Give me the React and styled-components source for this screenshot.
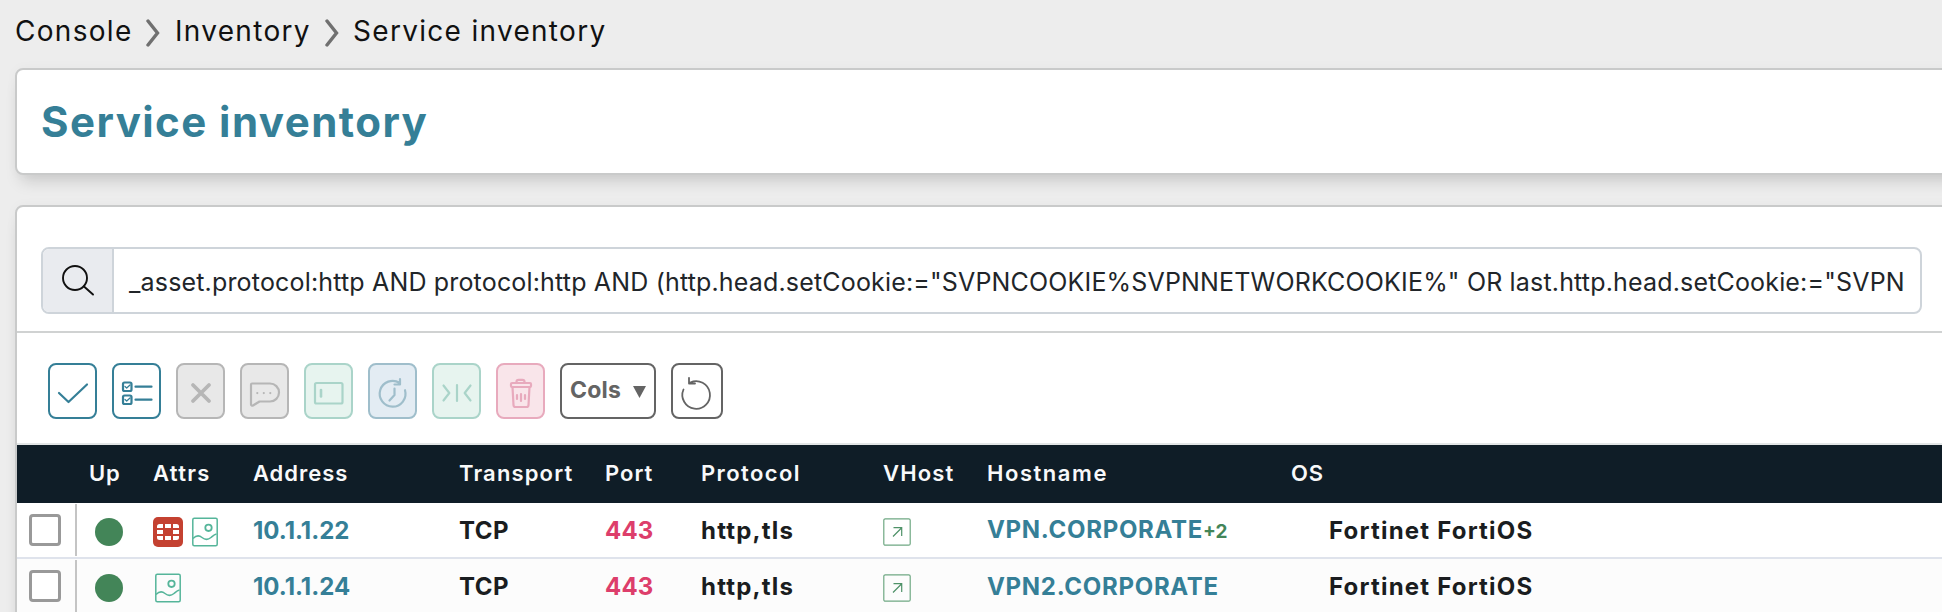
import styled, { createGlobalStyle } from "styled-components";

const GlobalStyle = createGlobalStyle`
  * {
    box-sizing: border-box;
  }
  body {
    margin: 0;
    height: 612px;
    overflow: hidden;
    background: #ededed;
    font-family: Inter, "Liberation Sans", sans-serif;
  }
`;

const buttons = [
  { tone: "active", icon: "check" },
  { tone: "active", icon: "list" },
  { tone: "gray", icon: "close" },
  { tone: "gray", icon: "comment" },
  { tone: "green", icon: "tag" },
  { tone: "blue", icon: "clock" },
  { tone: "green", icon: "merge" },
  { tone: "pink", icon: "trash" },
];

const tones = {
  active: { color: "#357f97", background: "#fff" },
  gray: { color: "#b6b6b6", background: "#e8e8e8" },
  green: { color: "#aad4c9", background: "#e7f4ef" },
  blue: { color: "#9fbecb", background: "#e3ecf3" },
  pink: { color: "#e8aabd", background: "#f9e5ea" },
  dark: { color: "#646464", background: "#fff" },
};

const columns = [
  { label: "Up", spacing: 0.8 },
  { label: "Attrs", spacing: 1.3 },
  { label: "Address", spacing: 0.95 },
  { label: "Transport", spacing: 1.15 },
  { label: "Port", spacing: 1 },
  { label: "Protocol", spacing: 1.4 },
  { label: "VHost", spacing: 1.15 },
  { label: "Hostname", spacing: 1.55 },
  { label: "OS", spacing: 0.8 },
];

const services = [
  {
    address: "10.1.1.22",
    transport: "TCP",
    port: 443,
    protocol: "http,tls",
    hostname: "VPN.CORPORATE",
    more: "+2",
    os: "Fortinet FortiOS",
    fortinet: true,
  },
  {
    address: "10.1.1.24",
    transport: "TCP",
    port: 443,
    protocol: "http,tls",
    hostname: "VPN2.CORPORATE",
    os: "Fortinet FortiOS",
  },
];

const query =
  '_asset.protocol:http AND protocol:http AND (http.head.setCookie:="SVPNCOOKIE%SVPNNETWORKCOOKIE%" OR last.http.head.setCookie:="SVPN';

const Chevron = () => (
  <ChevronIcon viewBox="0 0 14 28">
    <path d="M2 2l9.500 12L2 26" />
  </ChevronIcon>
);

const ToolIcon = ({ name }) => {
  switch (name) {
    case "check":
      return (
        <Icon viewBox="0 0 45 52">
          <path d="M9 28l9.500 9L37 19.500" />
        </Icon>
      );
    case "list":
      return (
        <Icon viewBox="0 0 45 52">
          <rect x="9" y="17.500" width="8.500" height="8.500" rx="1.500" />
          <rect x="9" y="30.500" width="8.500" height="8.500" rx="1.500" />
          <path
            d="M11 21.500l1.700 1.500 3.300-3M11 34.500l1.700 1.500 3.300-3"
            strokeWidth="1.300"
          />
          <path d="M21.500 21.700h16M21.500 34.700h16" />
        </Icon>
      );
    case "close":
      return (
        <Icon viewBox="0 0 45 52" strokeWidth="3.800">
          <path d="M15 20l16 16M31 20L15 36" />
        </Icon>
      );
    case "comment":
      return (
        <Icon viewBox="0 0 45 52">
          <path d="M9 19.500a1 1 0 0 1 1-1h18a9 9 0 0 1 0 18H17.500l-6.500 4a1.300 1.300 0 0 1-2-1z" />
          <path d="M15.300 28v.1M21.800 28v.1M28.300 28v.1" />
        </Icon>
      );
    case "tag":
      return (
        <Icon viewBox="0 0 45 52">
          <rect x="9" y="18" width="27.500" height="20.500" rx="1.500" />
          <path d="M15 25v6.500" strokeWidth="2.600" />
        </Icon>
      );
    case "clock":
      return (
        <Icon viewBox="0 0 45 52">
          <path d="M35 25.200a12.900 12.900 0 1 1-5.300-7.200M30 14.200v5.300h-5.500M24.500 23.500v6.500l-5 5.500" />
        </Icon>
      );
    case "merge":
      return (
        <Icon viewBox="0 0 45 52">
          <path d="M9.500 20.500l5.800 7.500-5.800 7.500M23 20v16M36.500 20.500L30.700 28l5.800 7.500" />
        </Icon>
      );
    case "trash":
      return (
        <Icon viewBox="0 0 45 52">
          <rect x="13" y="18" width="20" height="4" rx="1" />
          <path d="M18.500 18v-1.200a2 2 0 0 1 2-2h4a2 2 0 0 1 2 2V18M14.500 22l1 18a2 2 0 0 0 2 2h11a2 2 0 0 0 2-2l1-18M19 30v4M23 29v7M27 30v4" />
        </Icon>
      );
    default:
      return (
        <Icon viewBox="0 0 48 52" strokeWidth="1.800">
          <path d="M10.500 24.500a13.800 13.800 0 1 0 6.800-7M16 12.800v5.700h6" />
        </Icon>
      );
  }
};

const FortinetIcon = () => (
  <svg width="30" height="30" viewBox="0 0 30 30">
    <rect width="30" height="30" rx="5" fill="#c44131" />
    <path
      fill="#fff"
      d="M4 11V9.500A2.500 2.500 0 0 1 6.500 7H10v4zM12 7h6v4h-6zM20 7h3.500A2.500 2.500 0 0 1 26 9.500V11h-6zM4 13h6v4H4zM20 13h6v4h-6zM4 19h6v4H6.500A2.500 2.500 0 0 1 4 20.500zM12 19h6v4h-6zM20 19h6v1.500a2.500 2.500 0 0 1-2.500 2.500H20z"
    />
  </svg>
);

const ScreenshotIcon = () => (
  <svg
    width="26"
    height="30"
    viewBox="0 0 26 30"
    fill="none"
    stroke="#55b59a"
    strokeWidth="1.500"
  >
    <rect x=".8" y="1.200" width="24.400" height="27.600" rx="1.500" />
    <circle cx="16.500" cy="10.800" r="3.200" strokeWidth="1.800" />
    <path d="M1 21.500c3-3 6-3.500 9-1s6 2.500 9 0c2-1.700 3-3 5.500-3.500" />
  </svg>
);

const LinkIcon = () => (
  <svg
    width="28"
    height="28"
    viewBox="0 0 28 28"
    fill="none"
    stroke="#6fa883"
    strokeWidth="1.200"
  >
    <rect x=".8" y=".8" width="26.400" height="26.400" rx="1.500" />
    <path d="M10 18.500l8.500-8.500M10.500 9.700h8.200v8.200" stroke="#4f9268" />
  </svg>
);

const App = () => {
  return (
    <Page>
      <GlobalStyle />
      <Breadcrumbs>
        <Crumb $w={116}>Console</Crumb>
        <Chevron />
        <Crumb $w={135}>Inventory</Crumb>
        <Chevron />
        <Crumb>Service inventory</Crumb>
      </Breadcrumbs>

      <TitleCard>
        <Title>Service inventory</Title>
      </TitleCard>

      <InventoryCard>
        <SearchBar>
          <SearchAddon>
            <svg
              width="34"
              height="34"
              viewBox="0 0 34 34"
              fill="none"
              stroke="#111"
              strokeWidth="1.900"
              strokeLinecap="round"
            >
              <circle cx="14" cy="14" r="12" />
              <path d="M23 22.500l9 8" />
            </svg>
          </SearchAddon>
          <SearchText>{query}</SearchText>
        </SearchBar>

        <Toolbar>
          {buttons.map(({ tone, icon }) => (
            <ToolButton key={icon} $tone={tone}>
              <ToolIcon name={icon} />
            </ToolButton>
          ))}
          <ToolButton $tone="dark" $width={96}>
            <ColsLabel>Cols</ColsLabel>
            <Caret viewBox="0 0 13 12">
              <path d="M0 0h13L6.500 12z" />
            </Caret>
          </ToolButton>
          <ToolButton $tone="dark" $width={52}>
            <ToolIcon name="refresh" />
          </ToolButton>
        </Toolbar>

        <HeaderRow>
          <span />
          {columns.map(({ label, spacing }) => (
            <HeaderCell key={label} $spacing={spacing}>
              {label}
            </HeaderCell>
          ))}
        </HeaderRow>
        {services.map((service) => (
          <Row key={service.address}>
            <CheckCell>
              <Checkbox />
            </CheckCell>
            <UpCell>
              <UpDot />
            </UpCell>
            <Attrs $single={!service.fortinet}>
              {service.fortinet && <FortinetIcon />}
              <ScreenshotIcon />
            </Attrs>
            <Cell $color="#357f97" $spacing={0}>
              {service.address}
            </Cell>
            <Cell $spacing={0.5}>{service.transport}</Cell>
            <Cell $color="#dd3e6b" $spacing={0.2}>
              {service.port}
            </Cell>
            <Cell $spacing={1.2}>{service.protocol}</Cell>
            <IconCell>
              <LinkIcon />
            </IconCell>
            <Cell $color="#357f97" $spacing={0.7} $raised={service.more}>
              {service.hostname}
              {service.more && <More>{service.more}</More>}
            </Cell>
            <Cell $indent={38} $spacing={1.2}>
              {service.os}
            </Cell>
          </Row>
        ))}
      </InventoryCard>
    </Page>
  );
};

const Page = styled.div`
  width: 1942px;
  height: 612px;
  padding-left: 15px;
  overflow: hidden;
`;

const Breadcrumbs = styled.div`
  display: flex;
  align-items: center;
  height: 68px;
  padding-bottom: 6px;
  gap: 15px;
`;
const Crumb = styled.span`
  width: ${({ $w }) => ($w ? `${$w}px` : "auto")};
  font-size: 28px;
  letter-spacing: 1.3px;
  color: #111;
  white-space: nowrap;

  &:last-child {
    margin-left: -1px;
  }
`;
const ChevronIcon = styled.svg`
  width: 14px;
  height: 28px;
  margin-top: 3px;
  fill: none;
  stroke: #707070;
  stroke-width: 3.4;
  stroke-linecap: round;
`;

const Card = styled.div`
  width: 1960px;
  background: #fff;
  border: 2px solid #c9caca;
  border-radius: 8px;
  box-shadow: 0 12px 16px -6px rgba(0, 0, 0, 0.15),
    0 0 12px rgba(0, 0, 0, 0.03);
`;
const TitleCard = styled(Card)`
  display: flex;
  align-items: center;
  height: 107px;
  padding-left: 24px;
`;
const Title = styled.h1`
  margin: 0;
  font-size: 42px;
  font-weight: 650;
  letter-spacing: 1.45px;
  color: #357f97;
`;

const InventoryCard = styled(Card)`
  height: 500px;
  margin-top: 30px;
  padding-top: 40px;
`;
const SearchBar = styled.div`
  display: flex;
  width: 1881px;
  height: 67px;
  margin-left: 24px;
  border: 2px solid #ced4da;
  border-radius: 8px;
  overflow: hidden;
`;
const SearchAddon = styled.div`
  display: flex;
  align-items: center;
  justify-content: center;
  flex: none;
  width: 71px;
  background: #e9ebef;
  border-right: 2px solid #ced4da;
`;
const SearchText = styled.div`
  padding-left: 15px;
  line-height: 67px;
  font-size: 25px;
  letter-spacing: 0.17px;
  color: #212529;
  white-space: nowrap;
`;

const Toolbar = styled.div`
  display: flex;
  gap: 15px;
  height: 114px;
  margin-top: 17px;
  padding: 30px 0 0 31px;
  border-top: 2px solid #d0d2d2;
  border-bottom: 2px solid #e3e6e6;
`;
const ToolButton = styled.button`
  display: flex;
  align-items: center;
  justify-content: center;
  flex: none;
  width: ${({ $width }) => $width || 49}px;
  height: 56px;
  padding: 0;
  color: ${({ $tone }) => tones[$tone].color};
  background: ${({ $tone }) => tones[$tone].background};
  border: 2px solid currentColor;
  border-radius: 8px;
`;
const Icon = styled.svg`
  width: 100%;
  height: 100%;
  fill: none;
  stroke: currentColor;
  stroke-linecap: round;
  stroke-linejoin: round;
  stroke-width: ${({ strokeWidth }) => strokeWidth || 2.2};
`;
const ColsLabel = styled.span`
  margin-bottom: 3px;
  font: 650 23px Inter, sans-serif;
  letter-spacing: 0.2px;
`;
const Caret = styled.svg`
  width: 13px;
  height: 12px;
  margin: 2px 0 0 12px;
  fill: currentColor;
`;

const Grid = styled.div`
  display: grid;
  grid-template-columns: 72px 64px 100px 206px 146px 96px 182px 104px 304px 1fr;
`;
const HeaderRow = styled(Grid)`
  height: 58px;
  background: #0f1d27;
`;
const HeaderCell = styled.div`
  line-height: 56px;
  font-size: 22px;
  font-weight: 600;
  letter-spacing: ${({ $spacing }) => $spacing}px;
  color: #f8f9fa;
`;
const Row = styled(Grid)`
  height: 56px;
  border-bottom: 2px solid #dfe3ec;
  background: #fff;

  & + & {
    background: #fcfcfc;
  }
`;
const CheckCell = styled.div`
  width: 60px;
  height: 52px;
  margin-top: 1px;
  padding: 10px 0 0 12px;
  border-right: 2px solid #c4c4c4;
`;
const Checkbox = styled.div`
  width: 32px;
  height: 32px;
  border: 3px solid #999;
  border-radius: 4px;
  background: #fff;
`;
const UpCell = styled.div`
  padding: 15px 0 0 6px;
`;
const UpDot = styled.div`
  width: 28px;
  height: 28px;
  border-radius: 50%;
  background: #438558;
`;
const Attrs = styled.div`
  display: flex;
  gap: 9px;
  padding: 14px 0 0 ${({ $single }) => ($single ? 2 : 0)}px;
`;
const IconCell = styled.div`
  padding-top: 15px;
`;
const Cell = styled.div`
  padding-left: ${({ $indent }) => $indent || 0}px;
  line-height: ${({ $raised }) => ($raised ? 54 : 56)}px;
  font-size: 24px;
  font-weight: 650;
  letter-spacing: ${({ $spacing }) => $spacing}px;
  color: ${({ $color }) => $color || "#1a1d20"};
  white-space: nowrap;
`;
const More = styled.span`
  font-size: 19px;
  font-weight: 700;
  letter-spacing: 0;
  color: #438558;
`;

export default App;
